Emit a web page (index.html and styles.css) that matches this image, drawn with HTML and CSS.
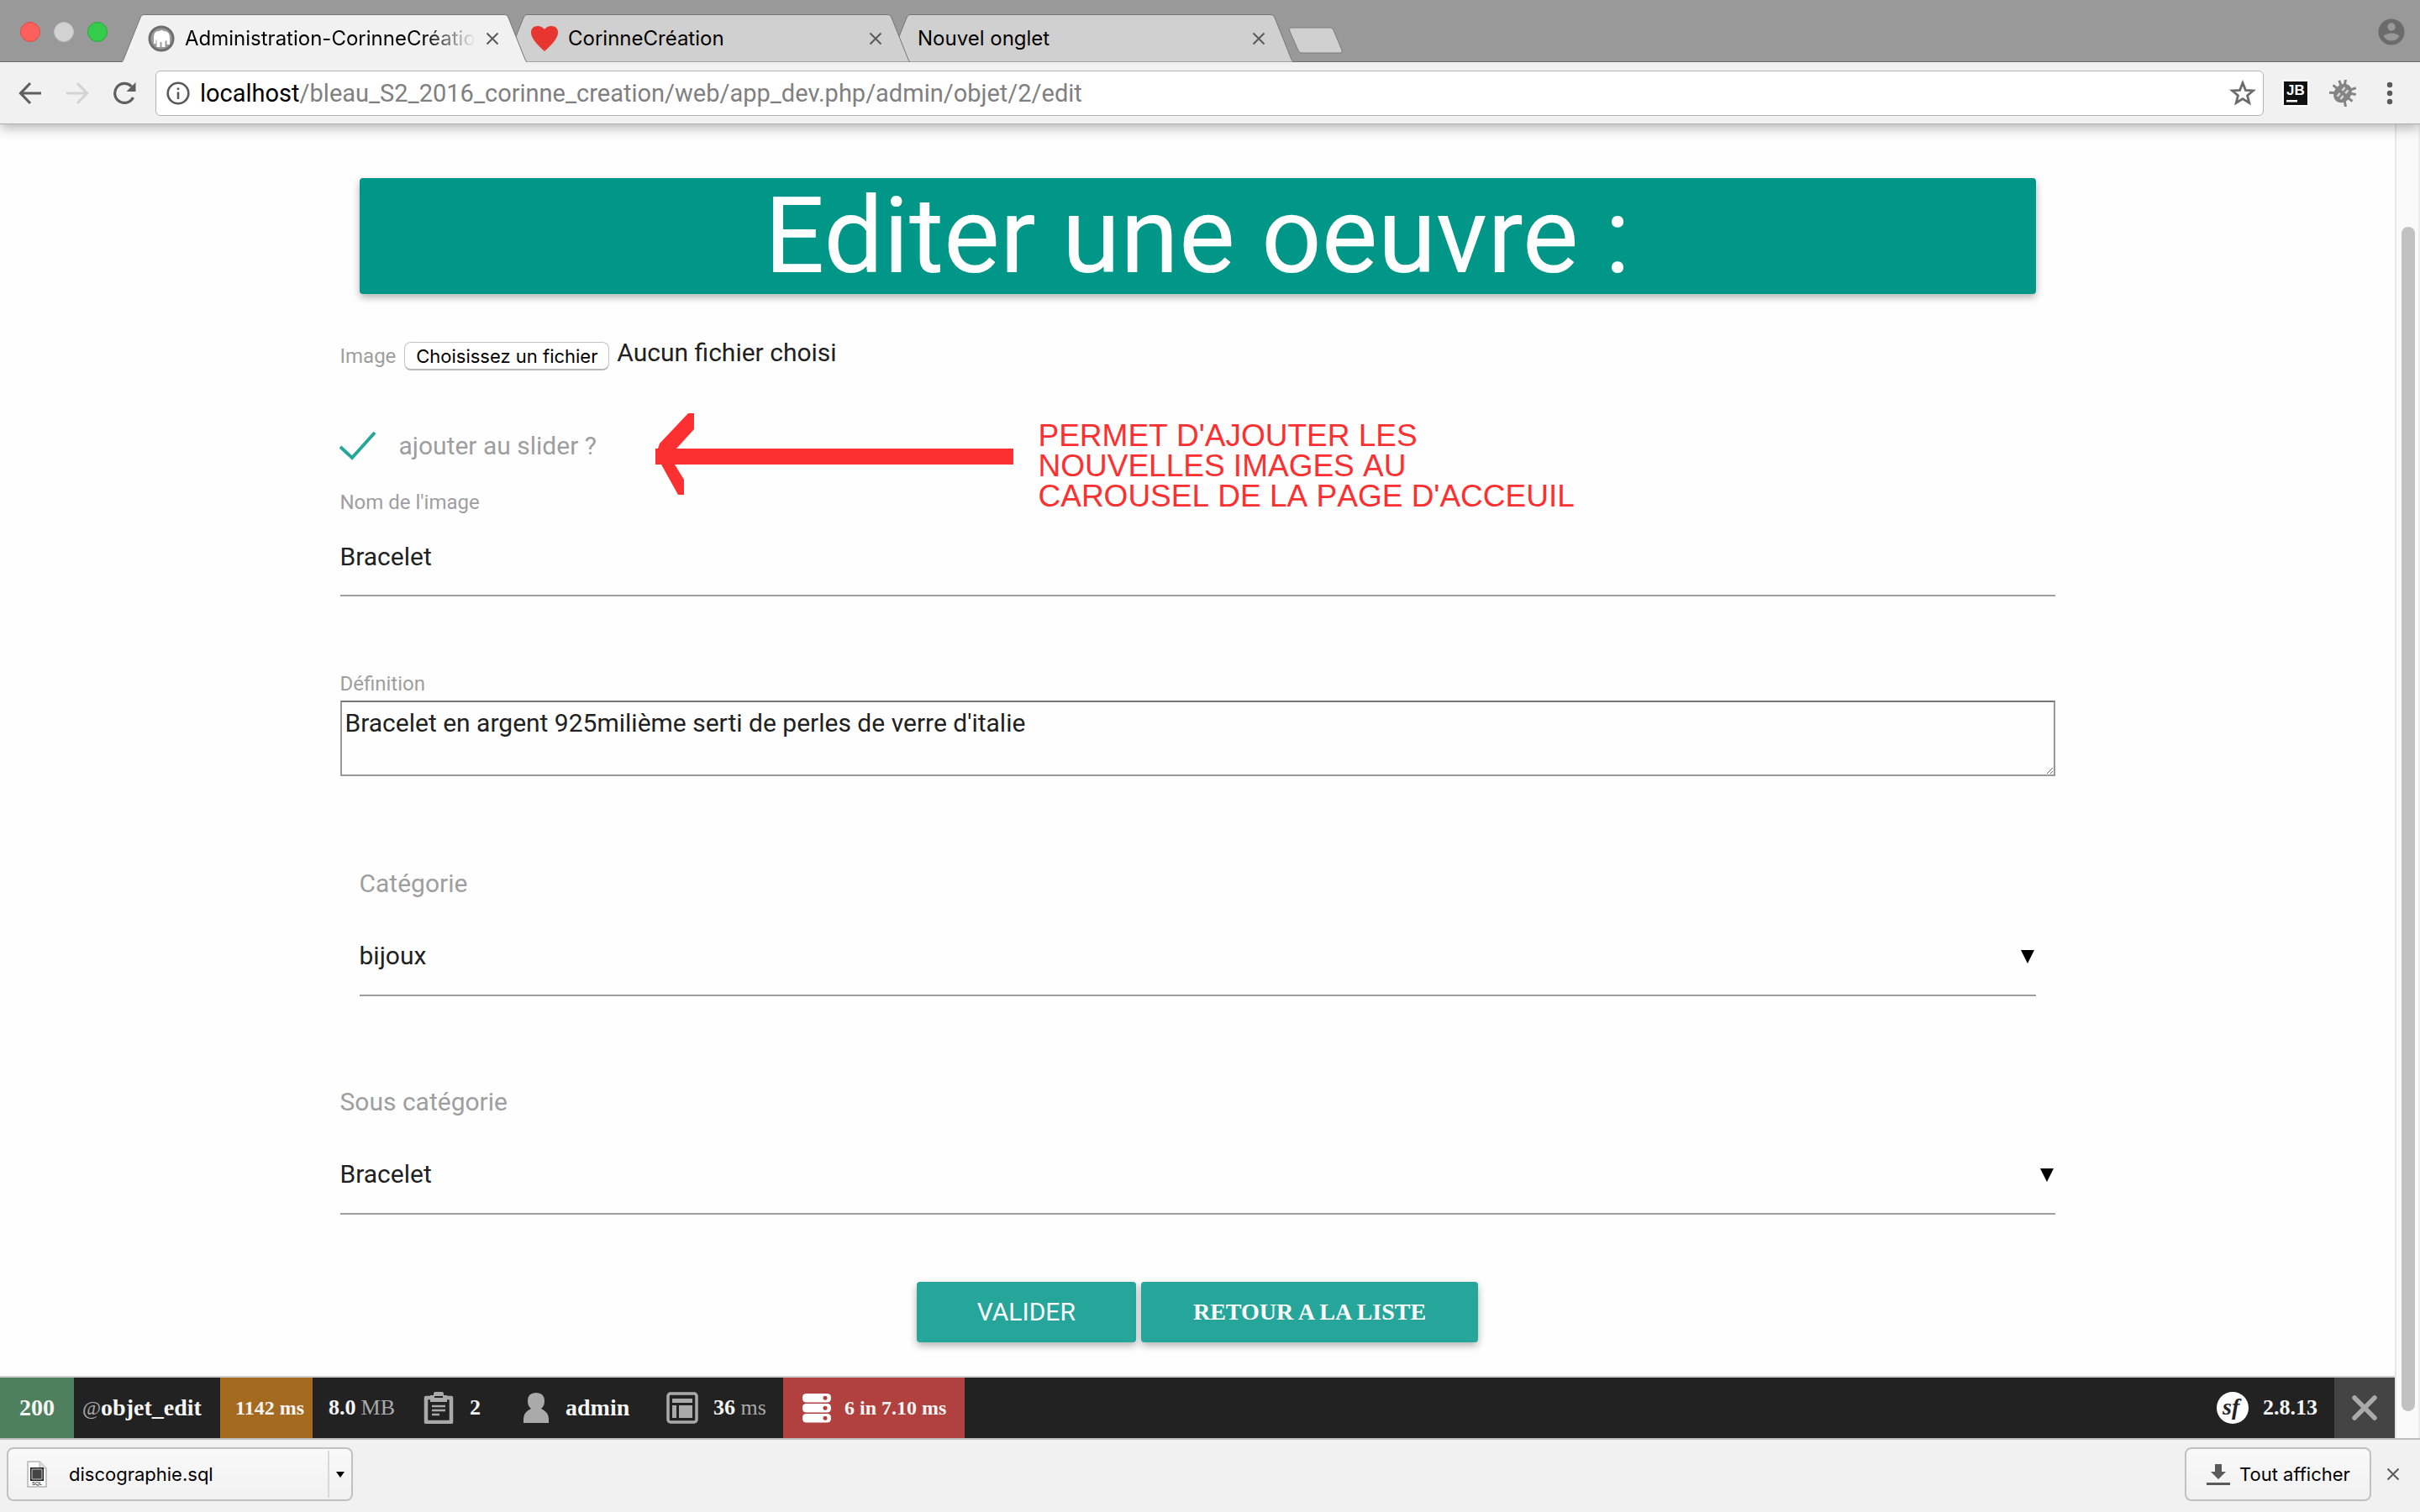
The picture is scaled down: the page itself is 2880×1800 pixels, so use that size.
FILE: index.html
```html
<!DOCTYPE html>
<html lang="fr">
<head>
<meta charset="utf-8">
<title>Administration-CorinneCréation</title>
<link rel="stylesheet" href="styles.css">
</head>
<body>
<header class="chrome">
  <div class="tabstrip">
    <div class="lights">
      <span class="light light-close"></span>
      <span class="light light-min"></span>
      <span class="light light-max"></span>
    </div>
    <nav class="tabs">
      <div class="tab tab-active">
        <svg class="tab-shape" viewBox="0 0 482 57" preserveAspectRatio="none"><path d="M0 57 L2 54 L22 4 Q23 .5 26 .5 H456 Q459 .5 460 4 L480 54 L482 57"/></svg>
        <svg class="favicon" viewBox="0 0 32 32"><circle cx="16" cy="16" r="14" fill="#9b9b9b" stroke="#6e6e6e" stroke-width="3"/><path fill="#fff" d="M7 13Q8 6 14 7Q16 5 19 7Q26 7 26 15V23H22.500V18L20.500 19V26H16.500V20H14.500V26H10.500V18L9.500 17V22H7z"/></svg>
        <a class="tab-title" href="#">Administration-CorinneCréation</a>
        <button class="tab-close" aria-label="Fermer"><svg viewBox="0 0 16 16"><path d="M1.500 1.500l13 13M14.500 1.500l-13 13"/></svg></button>
      </div>
      <div class="tab tab-second">
        <svg class="tab-shape" viewBox="0 0 482 57" preserveAspectRatio="none"><path d="M0 57 L2 54 L22 4 Q23 .5 26 .5 H456 Q459 .5 460 4 L480 54 L482 57 Z"/></svg>
        <svg class="favicon" viewBox="0 0 32 32"><path fill="#e8352f" d="M16 31Q0 17 0 9Q0 1 8 1Q13 1 16 5Q19 1 24 1Q32 1 32 9Q32 17 16 31z"/></svg>
        <a class="tab-title" href="#">CorinneCréation</a>
        <button class="tab-close" aria-label="Fermer"><svg viewBox="0 0 16 16"><path d="M1.500 1.500l13 13M14.500 1.500l-13 13"/></svg></button>
      </div>
      <div class="tab">
        <svg class="tab-shape" viewBox="0 0 482 57" preserveAspectRatio="none"><path d="M0 57 L2 54 L22 4 Q23 .5 26 .5 H456 Q459 .5 460 4 L480 54 L482 57 Z"/></svg>
        <a class="tab-title" href="#">Nouvel onglet</a>
        <button class="tab-close" aria-label="Fermer"><svg viewBox="0 0 16 16"><path d="M1.500 1.500l13 13M14.500 1.500l-13 13"/></svg></button>
      </div>
    </nav>
    <button class="newtab" aria-label="Nouvel onglet"><svg viewBox="0 0 66 32"><path d="M3 1H50Q53 1 54 4L64 28Q65 31 62 31H16Q13 31 12 28L1.500 4Q1 1 3 1z"/></svg></button>
    <button class="profile" aria-label="Profil"><svg viewBox="0 0 32 32"><circle cx="16" cy="16" r="15.500" fill="#6b6b6b"/><circle cx="16" cy="10" r="4.700" fill="#999"/><path fill="#999" d="M6.500 21Q10 17.500 16 17.500T25.500 21Q22 26.500 16 26.500T6.500 21z"/></svg></button>
  </div>
  <div class="toolbar">
    <button class="nav-btn" aria-label="Précédent"><svg viewBox="0 0 28 28"><path d="M27 14H3M14 2L2.500 14L14 26" fill="none" stroke="#5f5f5f" stroke-width="3.200"/></svg></button>
    <button class="nav-btn" aria-label="Suivant"><svg viewBox="0 0 28 28"><path d="M1 14H25M14 2L25.500 14L14 26" fill="none" stroke="#d3d3d3" stroke-width="3.200"/></svg></button>
    <button class="nav-btn" aria-label="Actualiser"><svg viewBox="0 0 28 28"><path d="M24.500 19A11.500 11.500 0 1 1 22.500 6" fill="none" stroke="#5f5f5f" stroke-width="3.200"/><path d="M27.500 1V12H16.500z" fill="#5f5f5f"/></svg></button>
    <div class="omnibox">
      <svg class="info" viewBox="0 0 28 28"><circle cx="14" cy="14" r="12.300" fill="none" stroke="#5a5a5a" stroke-width="2.600"/><path d="M14 12.500V21M14 7.500V10" stroke="#5a5a5a" stroke-width="2.600"/></svg>
      <a class="url" href="#"><span class="host">localhost</span>/bleau_S2_2016_corinne_creation/web/app_dev.php/admin/objet/2/edit</a>
      <button class="star" aria-label="Favori"><svg viewBox="0 0 30 30"><path d="M15 3.500L18.200 11.600L26.700 12.100L20.200 17.500L22.300 25.800L15 21.200L7.700 25.800L9.800 17.500L3.300 12.100L11.800 11.600z" fill="none" stroke="#6a6a6a" stroke-width="2.600"/></svg></button>
    </div>
    <button class="ext ext-jb" aria-label="JetBrains"><svg viewBox="0 0 32 32"><path d="M0 0h32v32H0z" fill="#fff"/><path d="M2 2h28v28H2z" fill="#111"/><text x="5" y="18" class="jb">JB</text><path d="M5 24h13v2.500H5z" fill="#fff"/></svg></button>
    <button class="ext" aria-label="Extension"><svg viewBox="0 0 32 32"><g transform="rotate(40 16 16)"><ellipse cx="16" cy="16" rx="10" ry="12" fill="#848484"/><path d="M11 6L8 1M21 6L24 1M8 10L3 7M24 10L29 7M7 16H1M25 16H31M8 22L3 26M24 22L29 26" stroke="#848484" stroke-width="3"/><path d="M13.500 9v5M18.500 9v5M13.500 18v5M18.500 18v5" stroke="#d8d8d8" stroke-width="2.500"/></g></svg></button>
    <button class="more" aria-label="Menu"><svg viewBox="0 0 8 28"><g fill="#5a5a5a"><circle cx="4" cy="4" r="3.200"/><circle cx="4" cy="14" r="3.200"/><circle cx="4" cy="24" r="3.200"/></g></svg></button>
  </div>
</header>

<div class="viewport">
  <div class="page">
    <main class="container">
      <h1 class="banner">Editer une oeuvre :</h1>
      <form class="form">
        <div class="file-row">
          <label class="small-label" for="image">Image</label>
          <span class="file-btn">Choisissez un fichier<input type="file" id="image"></span>
          <span class="file-name">Aucun fichier choisi</span>
        </div>
        <div class="check-row">
          <input type="checkbox" id="slider" checked>
          <label for="slider">ajouter au slider ?</label>
          <div class="note">
            <svg class="note-arrow" viewBox="0 0 426 98"><path fill="#fc3030" d="M39 0H46V19L25 42H426V61H23L34 79V97H27L7 61H0V42H3L5 36z"/></svg>
            <p class="note-text">PERMET D'AJOUTER LES<br>NOUVELLES IMAGES AU<br>CAROUSEL DE LA PAGE D'ACCEUIL</p>
          </div>
        </div>
        <div class="field">
          <label class="small-label" for="nom">Nom de l'image</label>
          <input class="text" type="text" id="nom" value="Bracelet">
        </div>
        <div class="field">
          <label class="small-label" for="definition">Définition</label>
          <textarea id="definition">Bracelet en argent 925milième serti de perles de verre d'italie</textarea>
        </div>
        <div class="select-field inset">
          <label for="categorie">Catégorie</label>
          <select id="categorie"><option>bijoux</option></select>
        </div>
        <div class="select-field">
          <label for="sous">Sous catégorie</label>
          <select id="sous"><option>Bracelet</option></select>
        </div>
        <div class="actions">
          <button class="btn btn-submit" type="button">VALIDER</button>
          <a class="btn btn-back" href="#">RETOUR A LA LISTE</a>
        </div>
      </form>
    </main>
    <footer class="profiler">
      <a class="cell green" href="#">200</a>
      <a class="cell route" href="#"><span class="dim">@</span>objet_edit</a>
      <a class="cell orange" href="#">1142 ms</a>
      <a class="cell memory" href="#">8.0 <span class="dim">MB</span></a>
      <a class="cell forms" href="#"><svg viewBox="0 0 38 38"><path d="M4 7H34V36H4z" fill="none" stroke="#aaa" stroke-width="4.500" stroke-linejoin="round"/><path d="M9 4h4V2q0-2 2-2h8q2 0 2 2v2h4v8H9z" fill="#aaa"/><path d="M14 6h10" stroke="#222" stroke-width="2"/><path d="M11 17H27M11 22H27M11 27H20" stroke="#aaa" stroke-width="2.600"/></svg>2</a>
      <a class="cell user" href="#"><svg viewBox="0 0 38 38"><path d="M4 37V32Q4 24 13 20Q9 17 9 11Q9 1 19 1T29 11Q29 17 25 20Q34 24 34 32V37z" fill="#aaa"/></svg>admin</a>
      <a class="cell twig" href="#"><svg viewBox="0 0 38 38"><rect x="2" y="2" width="34" height="34" rx="3" fill="none" stroke="#aaa" stroke-width="3.500"/><path d="M7 8H31V13H7zM7 16H12V31H7zM15 16H31V31H15z" fill="#aaa"/></svg><span>36 <span class="dim">ms</span></span></a>
      <a class="cell red" href="#"><svg viewBox="0 0 38 38"><g fill="#fff"><rect x="2" y="2" width="34" height="10.500" rx="4.500"/><rect x="2" y="14" width="34" height="10.500" rx="4.500"/><rect x="2" y="26" width="34" height="10.500" rx="4.500"/></g><g fill="#b0413e"><circle cx="29" cy="7.200" r="2.500"/><circle cx="29" cy="19.200" r="2.500"/><circle cx="29" cy="31.200" r="2.500"/></g></svg>6 in 7.10 ms</a>
      <a class="cell version" href="#"><svg viewBox="0 0 38 38"><circle cx="19" cy="19" r="19" fill="#fff"/><text x="7" y="27" class="sf">sf</text></svg>2.8.13</a>
      <button class="cell hide" aria-label="Fermer"><svg viewBox="0 0 38 38"><path d="M7 7L31 31M31 7L7 31" stroke="#aaa" stroke-width="5.500" stroke-linecap="round"/></svg></button>
    </footer>
  </div>
  <div class="scrollbar"><div class="thumb"></div></div>
</div>

<aside class="shelf">
  <div class="download">
    <button class="download-file"><svg viewBox="0 0 24 32"><path d="M1 1H15L23 9V31H1z" fill="#fbfbfb" stroke="#b5b5b5" stroke-width="1.500"/><path d="M15 1V9H23" fill="#ddd" stroke="#b5b5b5"/><path d="M4 8h16v16H4z" fill="#222"/><path d="M6 10h12v12H6z" fill="#444" stroke="#ccc"/><text x="6" y="29" class="sql">SQL</text></svg>discographie.sql</button>
    <button class="download-menu" aria-label="Options"><svg viewBox="0 0 10 7"><path d="M0 0h10L5 7z"/></svg></button>
  </div>
  <button class="show-all"><svg viewBox="0 0 28 28"><path d="M10 2h8v9h5l-9 9l-9-9h5zM0 24h28v3H0z" fill="#5a5a5a"/></svg>Tout afficher</button>
  <button class="shelf-close" aria-label="Fermer"><svg viewBox="0 0 16 16"><path d="M1.500 1.500l13 13M14.500 1.500l-13 13"/></svg></button>
</aside>
</body>
</html>
```
FILE: styles.css
```css
* { box-sizing: border-box; }

body {
  margin: 0;
  min-height: 100vh;
  display: flex;
  flex-direction: column;
  background: #fefefe;
  color: #212121;
  font-family: Roboto, "Liberation Sans", sans-serif;
  font-size: 30px;
  line-height: 36px;
}

button {
  padding: 0;
  border: 0;
  background: none;
  color: inherit;
  font: inherit;
  display: flex;
  align-items: center;
}

a { color: inherit; text-decoration: none; }
svg { display: block; flex: none; }

/* Browser frame */
.chrome {
  position: relative;
  z-index: 2;
  border-bottom: 1px solid #b0b0b0;
  box-shadow: 0 4px 14px rgba(0, 0, 0, .3);
  font-family: Inter, "Liberation Sans", sans-serif;
}

.tabstrip {
  height: 74px;
  display: flex;
  align-items: flex-end;
  background: linear-gradient(#6b6b6b, #6b6b6b) bottom / 100% 1px no-repeat, #999;
}

.lights { display: flex; gap: 16px; padding: 0 0 24px 24px; width: 145px; }
.light { width: 24px; height: 24px; border-radius: 50%; border: 1px solid; }
.light-close { background: #fc605c; border-color: #de4a46; }
.light-min { background: #d2d2d2; border-color: #c2c2c2; }
.light-max { background: #35cc4b; border-color: #27a939; }

.tabs { display: flex; }
.tab {
  position: relative;
  width: 482px;
  height: 57px;
  margin-right: -26px;
  padding: 0 33px 0 35px;
  display: flex;
  align-items: center;
  gap: 12px;
  font-size: 24px;
  color: #000;
}
.tab-second { z-index: 1; }
.tab-active { z-index: 2; }
.tab-shape { position: absolute; inset: 0; width: 100%; height: 100%; }
.tab-shape path { fill: #d0d0d0; stroke: #757575; }
.tab-active .tab-shape path { fill: #f1f1f1; }
.favicon { position: relative; width: 32px; height: 32px; margin-left: -4px; }
.tab-title {
  position: relative;
  flex: 1;
  min-width: 0;
  overflow: hidden;
  white-space: nowrap;
}
.tab-active .tab-title { -webkit-mask-image: linear-gradient(90deg, #000 82%, transparent); mask-image: linear-gradient(90deg, #000 82%, transparent); }
.tab-close { position: relative; }
.tab-close svg, .shelf-close svg { width: 16px; height: 16px; stroke: #5a5a5a; stroke-width: 2; }
.newtab { margin: 0 auto 10px 20px; }
.newtab svg { width: 66px; height: 32px; fill: #d0d0d0; stroke: #7d7d7d; }
.profile { margin: 0 18px 20px 0; }
.profile svg { width: 32px; height: 32px; }

.toolbar {
  height: 73px;
  padding: 0 32px 0 22px;
  display: flex;
  align-items: center;
  gap: 28px;
  background: #f1f1f1;
}
.nav-btn svg { width: 28px; height: 28px; }
.omnibox {
  flex: 1;
  height: 54px;
  margin-left: -5px;
  margin-right: -6px;
  padding: 0 8px 0 12px;
  display: flex;
  align-items: center;
  gap: 12px;
  border: 1px solid #b4b4b4;
  border-radius: 6px;
  background: #fff;
  font-family: Roboto, "Liberation Sans", sans-serif;
  font-size: 29px;
}
.info { width: 28px; height: 28px; }
.url { flex: 1; color: #808080; }
.host { color: #000; }
.star svg { width: 32px; height: 32px; }
.ext svg { width: 32px; height: 32px; }
.ext-jb { margin-right: -4px; }
.jb { font: bold 17px "Liberation Sans", sans-serif; fill: #fff; }
.more { margin-left: 8px; }
.more svg { width: 8px; height: 28px; }

/* Web page */
.viewport { flex: 1; display: flex; }
.page { flex: 1; min-width: 0; display: flex; flex-direction: column; }

.container { flex: 1; width: 70%; margin: 0 auto; padding: 64px 0 40px; }

.banner {
  margin: 0 0 57px;
  border-radius: 4px;
  background: #009688;
  box-shadow: 0 4px 10px rgba(0, 0, 0, .3);
  color: #fff;
  font-size: 126px;
  line-height: 138px;
  font-weight: 400;
  text-align: center;
}

.form { margin: 0 -23px; }
.small-label { color: #9e9e9e; font-size: 24px; line-height: 28px; }

.file-row { display: flex; align-items: center; height: 34px; }
.file-btn {
  position: relative;
  width: 244px;
  height: 34px;
  margin: 0 9px 0 10px;
  border: 1px solid #c4c4c4;
  border-bottom: 2px solid #b8b8b8;
  border-radius: 8px;
  background: #fff;
  color: #000;
  font-family: Inter, "Liberation Sans", sans-serif;
  font-size: 22px;
  line-height: 32px;
  text-align: center;
}
.file-btn input { position: absolute; inset: 0; width: 100%; opacity: 0; }
.file-name { margin-bottom: 8px; }

.check-row {
  position: relative;
  display: flex;
  align-items: center;
  height: 40px;
  margin-top: 70px;
  color: #9e9e9e;
}
.check-row input {
  appearance: none;
  width: 46px;
  height: 36px;
  margin: 0 26px 0 -2px;
  background: url("data:image/svg+xml,%3Csvg xmlns='http://www.w3.org/2000/svg' viewBox='0 0 46 36'%3E%3Cpath d='M2 19L16 32L43 2' fill='none' stroke='%2326a69a' stroke-width='4'/%3E%3C/svg%3E") center / 100% no-repeat;
}

/* Red remark laid over the form */
.note {
  position: absolute;
  left: 375px;
  top: -19px;
  display: flex;
  gap: 30px;
}
.note-arrow { width: 426px; height: 98px; }
.note-text {
  margin: 9px 0 0;
  color: #fc3030;
  font-family: "Liberation Sans", Arial, sans-serif;
  font-size: 37px;
  font-kerning: none;
  line-height: 36px;
  white-space: nowrap;
}

.field { display: flex; flex-direction: column; gap: 6px; margin-top: 90px; }
.check-row + .field { margin-top: 33px; }

.text, .select-field select {
  width: 100%;
  height: 92px;
  padding: 0 0 2px;
  border: 0;
  border-bottom: 2px solid #9e9e9e;
  border-radius: 0;
  background: transparent;
  color: #212121;
  font: inherit;
}
textarea {
  width: 100%;
  height: 90px;
  padding: 7px 4px;
  border: 2px solid #999;
  border-top-color: #757575;
  background: transparent;
  color: #212121;
  font: inherit;
}

.select-field { display: flex; flex-direction: column; gap: 24px; margin-top: 108px; color: #9e9e9e; }
.field + .select-field { margin-top: 110px; }
.select-field select {
  appearance: none;
  background: url("data:image/svg+xml,%3Csvg xmlns='http://www.w3.org/2000/svg' viewBox='0 0 16 16'%3E%3Cpath d='M0 0H16L8 16z'/%3E%3C/svg%3E") right 2px center / 16px no-repeat;
}
.inset { margin-left: 23px; margin-right: 23px; }

.actions { display: flex; justify-content: center; gap: 6px; margin-top: 80px; }
.btn {
  height: 72px;
  display: flex;
  align-items: center;
  justify-content: center;
  border-radius: 4px;
  background: #26a69a;
  box-shadow: 0 4px 10px rgba(0, 0, 0, .3);
  color: #fff;
}
.btn-submit { padding: 0 72px; }
.btn-back { padding: 0 62px; font: bold 28px "Liberation Serif", serif; }

/* Symfony debug bar */
.profiler {
  display: grid;
  grid-template-columns: 88px 174px 110px 115px 119px 169px 157px 216px 1fr 72px;
  height: 74px;
  border-top: 2px solid #ccc;
  background: #222;
  color: #f5f5f5;
  font: bold 26px "Liberation Serif", serif;
}
.cell { display: flex; align-items: center; white-space: nowrap; }
.cell svg { width: 38px; height: 38px; }
.dim { color: #aaa; font-weight: 400; }
.green { justify-content: center; background: #4f805d; font-size: 28px; }
.route { padding-left: 10px; font-size: 28px; }
.route .dim { font-size: 24px; }
.orange { justify-content: flex-end; padding-right: 10px; background: #a46a1f; font-size: 24px; }
.memory { justify-content: flex-end; gap: 6px; padding-right: 17px; }
.forms { padding-left: 16px; gap: 18px; }
.user { padding-left: 13px; gap: 16px; font-size: 28px; }
.twig { padding-left: 18px; gap: 18px; }
.red { padding-left: 21px; gap: 14px; background: #b0413e; font-size: 24px; }
.version { justify-content: flex-end; gap: 17px; padding-right: 20px; }
.hide { justify-content: center; background: #444; }
.sf { font: italic bold 28px "Liberation Serif", serif; fill: #222; }

.scrollbar {
  width: 30px;
  display: flex;
  padding: 122px 4px 32px 6px;
  border-left: 2px solid #e7e7e7;
  border-right: 2px solid #ececec;
  background: #fafafa;
}
.thumb { flex: 1; border-radius: 8px; background: #c1c1c1; }

/* Download shelf */
.shelf {
  height: 88px;
  display: flex;
  align-items: center;
  padding: 0 24px 4px 8px;
  border-top: 2px solid #bebebe;
  background: #f1f1f1;
  color: #000;
  font-family: Inter, "Liberation Sans", sans-serif;
  font-size: 22px;
}
.download, .show-all {
  height: 64px;
  border: 2px solid #c1c1c1;
  border-radius: 8px;
  background: linear-gradient(#f9f9f9, #f1f1f1);
}
.download { width: 412px; margin-right: auto; display: flex; }
.download-file { flex: 1; padding-left: 22px; gap: 26px; }
.download-file svg { width: 24px; height: 32px; }
.sql { font: 6px "Liberation Sans", sans-serif; }
.download-menu { width: 28px; margin: 2px 0; justify-content: center; border-left: 2px solid #d8d8d8; }
.download-menu svg { width: 10px; height: 7px; }
.show-all { width: 222px; padding-left: 24px; gap: 11px; }
.show-all svg { width: 28px; height: 28px; }
.shelf-close { margin-left: 18px; }
```
